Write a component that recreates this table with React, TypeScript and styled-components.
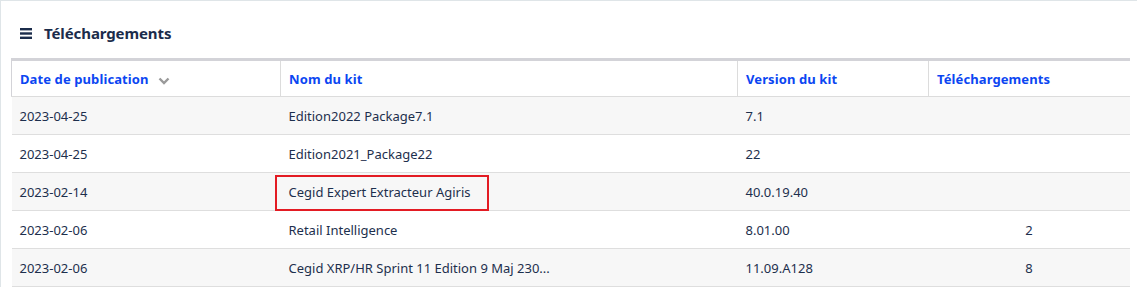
import React from 'react'
import styled, { createGlobalStyle } from 'styled-components'

const GlobalStyle = createGlobalStyle`
  html, body {
    margin: 0;
    padding: 0;
    background: #ffffff;
    font-family: "Noto Sans", "Open Sans", sans-serif;
  }
`

const Panel = styled.section`
  border-top: 1px solid #dfe5e8;
  border-left: 1px solid #dfe5e8;
  padding: 0 8px 0 10px;
  height: 287px;
  box-sizing: border-box;
  overflow: hidden;
`

const TitleBar = styled.h2`
  display: flex;
  align-items: center;
  gap: 12px;
  margin: 0;
  height: 57px;
  box-sizing: border-box;
  padding: 7px 0 0 9px;
  font-size: 15px;
  font-weight: 700;
  color: #1b2c4b;
  letter-spacing: -0.1px;
`

const Table = styled.table`
  width: 100%;
  border-collapse: collapse;
  table-layout: fixed;
  border-top: 3px solid #d3d3d8;
  font-size: 13px;
`

const HeadCell = styled.th`
  height: 34px;
  padding: 1px 8px 0;
  text-align: left;
  font-weight: 700;
  color: #0b46f2;
  letter-spacing: 0.1px;
  border-left: 1px solid #dcdcdc;
  border-bottom: 1px solid #dcdcdc;
  white-space: nowrap;
  &:first-child {
    border-left: 1px solid #d3d3d8;
  }
`

const Row = styled.tr<{ $shaded: boolean }>`
  background: ${p => (p.$shaded ? '#f7f7f7' : '#ffffff')};
  border-bottom: 1px solid #dedede;
`

const Cell = styled.td<{ $center?: boolean }>`
  height: 36px;
  padding: 1px 8px 0;
  color: #1d2f4d;
  white-space: nowrap;
  overflow: hidden;
  text-overflow: ellipsis;
  text-align: ${p => (p.$center ? 'center' : 'left')};
`

const MarkedCell = styled(Cell)`
  position: relative;
  overflow: visible;
`

const Highlight = styled.span`
  position: absolute;
  left: -6px;
  top: 2px;
  width: 214px;
  height: 36px;
  box-sizing: border-box;
  border: 2px solid #e31b23;
  pointer-events: none;
`

const SortIcon = styled.svg`
  margin-left: 9px;
  vertical-align: -1px;
`

const rows = [
  { date: '2023-04-25', name: 'Edition2022 Package7.1', version: '7.1', count: '' },
  { date: '2023-04-25', name: 'Edition2021_Package22', version: '22', count: '' },
  { date: '2023-02-14', name: 'Cegid Expert Extracteur Agiris', version: '40.0.19.40', count: '', marked: true },
  { date: '2023-02-06', name: 'Retail Intelligence', version: '8.01.00', count: '2' },
  { date: '2023-02-06', name: 'Cegid XRP/HR Sprint 11 Edition 9 Maj 230...', version: '11.09.A128', count: '8' },
]

const MenuIcon = () => (
  <svg width="12" height="11" viewBox="0 0 12 11">
    <rect x="0" y="0" width="12" height="2.4" fill="#1b2c4b" />
    <rect x="0" y="4.3" width="12" height="2.4" fill="#1b2c4b" />
    <rect x="0" y="8.6" width="12" height="2.4" fill="#1b2c4b" />
  </svg>
)

const App = () => (
  <>
    <GlobalStyle />
    <Panel>
      <TitleBar>
        <MenuIcon />
        Téléchargements
      </TitleBar>
      <Table>
        <colgroup>
          <col style={{ width: 269 }} />
          <col style={{ width: 457 }} />
          <col style={{ width: 191 }} />
          <col style={{ width: 201 }} />
        </colgroup>
        <thead>
          <tr>
            <HeadCell>
              Date de publication
              <SortIcon width="12" height="8" viewBox="0 0 12 8">
                <path d="M1.5 1.5 L6 6 L10.5 1.5" fill="none" stroke="#9a9a9a" strokeWidth="2.4" />
              </SortIcon>
            </HeadCell>
            <HeadCell>Nom du kit</HeadCell>
            <HeadCell>Version du kit</HeadCell>
            <HeadCell>Téléchargements</HeadCell>
          </tr>
        </thead>
        <tbody>
          {rows.map((r, i) => (
            <Row key={i} $shaded={i % 2 === 0}>
              <Cell>{r.date}</Cell>
              {r.marked ? (
                <MarkedCell>
                  {r.name}
                  <Highlight />
                </MarkedCell>
              ) : (
                <Cell>{r.name}</Cell>
              )}
              <Cell>{r.version}</Cell>
              <Cell $center>{r.count}</Cell>
            </Row>
          ))}
        </tbody>
      </Table>
    </Panel>
  </>
)

export default App
